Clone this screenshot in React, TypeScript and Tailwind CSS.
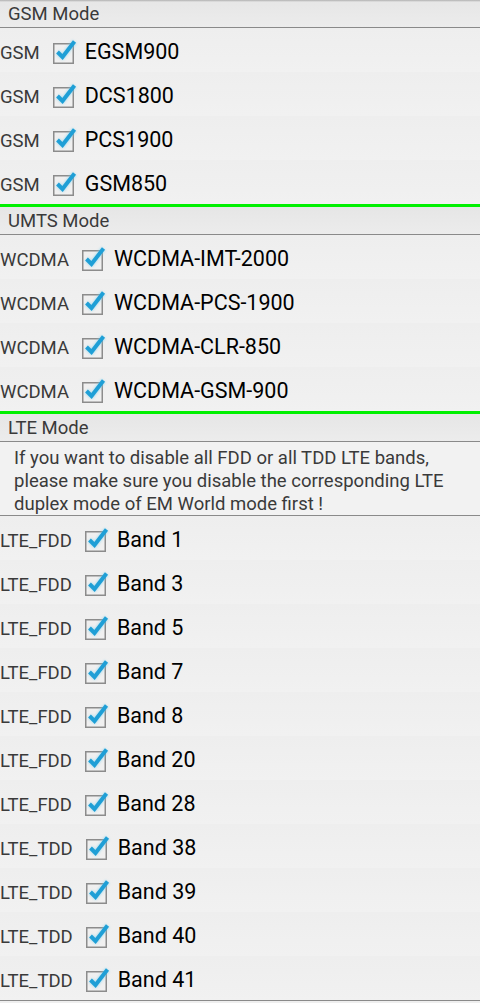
import React from "react";

const font = { fontFamily: "Roboto, 'Noto Sans', 'Liberation Sans', sans-serif" };

function Check() {
  return (
    <svg width="28" height="28" viewBox="0 0 28 28" className="shrink-0">
      <defs>
        <filter id="glow" x="-30%" y="-30%" width="160%" height="160%">
          <feGaussianBlur stdDeviation="1.1" />
        </filter>
      </defs>
      <rect x="2.75" y="7.75" width="19.5" height="19.5" fill="none" stroke="#8c8c8c" strokeWidth="1.5" />
      <path d="M6.5 16 L11.5 21 L23.5 5.5" fill="none" stroke="#7fd0ee" strokeWidth="5.5" strokeLinejoin="round" opacity="0.5" filter="url(#glow)" />
      <path d="M6.5 16 L11.5 21 L23.5 5.5" fill="none" stroke="#1f9fd6" strokeWidth="3.9" strokeLinejoin="miter" strokeLinecap="butt" />
    </svg>
  );
}

function Header({ title }: { title: string }) {
  return (
    <div className="h-[28px] flex items-center pl-[8px] pt-[2px] bg-gradient-to-b from-[#e6e6e6] to-[#ececec] border-b border-[#8a8a8a] text-[18.5px] text-[#3a3a3a]">
      {title}
    </div>
  );
}

function Row({ prefix, label }: { prefix: string; label: string }) {
  return (
    <div className="h-[44px] flex items-center bg-gradient-to-b from-[#eeeeee] to-[#f1f1f1]">
      <span className="text-[18.5px] text-[#3a3a3a] pt-[7px]">{prefix}</span>
      <span className="ml-[11px]">
        <Check />
      </span>
      <span className="text-[21.5px] text-black ml-[6px] pt-[4px]">{label}</span>
    </div>
  );
}

const Green = () => <div className="h-[3px] bg-[#00f000]" />;

export default function App() {
  const gsm = ["EGSM900", "DCS1800", "PCS1900", "GSM850"];
  const wcdma = ["WCDMA-IMT-2000", "WCDMA-PCS-1900", "WCDMA-CLR-850", "WCDMA-GSM-900"];
  const lte: [string, string][] = [
    ["LTE_FDD", "Band 1"],
    ["LTE_FDD", "Band 3"],
    ["LTE_FDD", "Band 5"],
    ["LTE_FDD", "Band 7"],
    ["LTE_FDD", "Band 8"],
    ["LTE_FDD", "Band 20"],
    ["LTE_FDD", "Band 28"],
    ["LTE_TDD", "Band 38"],
    ["LTE_TDD", "Band 39"],
    ["LTE_TDD", "Band 40"],
    ["LTE_TDD", "Band 41"],
  ];
  return (
    <div className="w-[480px] h-[1003px] overflow-hidden bg-[#efefef] relative" style={font}>
      <div className="absolute top-0 left-0 right-0 h-[2px] bg-gradient-to-b from-[#b0b0b0] to-transparent" />
      <Header title="GSM Mode" />
      {gsm.map((g) => (
        <Row key={g} prefix="GSM" label={g} />
      ))}
      <Green />
      <Header title="UMTS Mode" />
      {wcdma.map((g) => (
        <Row key={g} prefix="WCDMA" label={g} />
      ))}
      <Green />
      <Header title="LTE Mode" />
      <div className="h-[74px] border-b border-[#8a8a8a] pl-[14px] pr-[8px] pt-[5px] text-[18.5px] leading-[23px] text-[#3a3a3a] bg-[#f2f2f2]">
        If you want to disable all FDD or all TDD LTE bands, please make sure you disable the corresponding LTE duplex mode of EM World mode first !
      </div>
      {lte.map(([p, l]) => (
        <Row key={l} prefix={p} label={l} />
      ))}
      <div className="border-t border-[#8a8a8a]" />
    </div>
  );
}
